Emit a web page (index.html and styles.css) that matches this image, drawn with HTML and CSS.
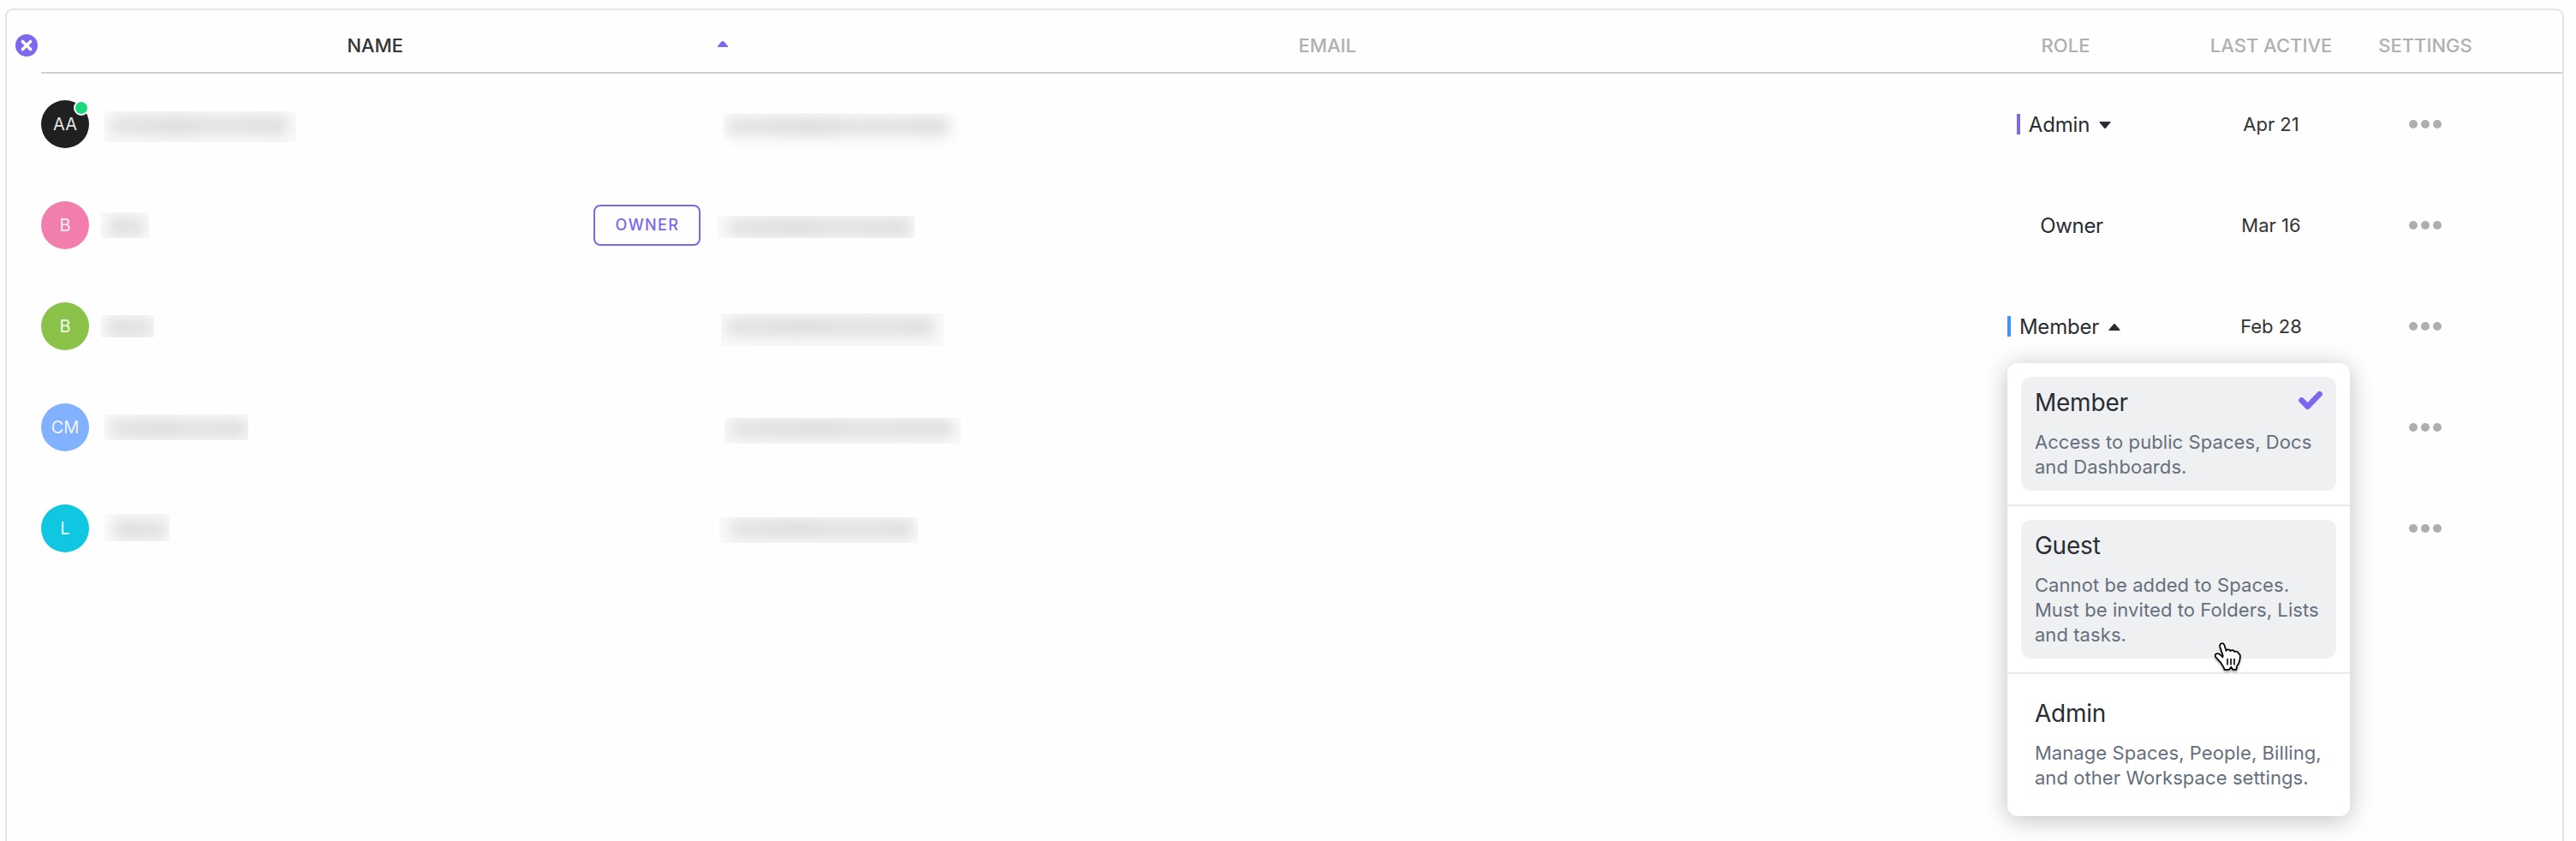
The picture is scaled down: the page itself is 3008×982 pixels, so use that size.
FILE: index.html
```
<!doctype html>
<html lang="en">

<head>
    <meta charset="utf-8">
    <title>People</title>
    <meta name="viewport" content="width=device-width, initial-scale=1">
    <link rel="stylesheet" href="styles.css">
</head>

<body>
    <div class="people">
        <div class="people-header">
            <div class="clear">
                <svg width="26" height="26" viewBox="0 0 26 26">
                    <circle cx="13" cy="13" r="13" fill="#7b68ee"/>
                    <path d="M8.4 8.400l9.200 9.200M17.600 8.400l-9.200 9.200" stroke="#fff" stroke-width="3.600" stroke-linecap="round"/>
                </svg>
            </div>
            <div class="row head-row">
                <div class="th active">NAME
                    <svg class="sort" width="12" height="7" viewBox="0 0 12 7"><path d="M0 7V6L4 1Q6-.8 8 1L12 6V7z" fill="#7b68ee"/></svg>
                </div>
                <div class="th">EMAIL</div>
                <div class="th">ROLE</div>
                <div class="th">LAST ACTIVE</div>
                <div class="th">SETTINGS</div>
            </div>
        </div>

        <div class="row">
            <div class="name">
                <div class="avatar dark">AA<i class="online"></i></div>
                <div class="hidden-text name-1"></div>
            </div>
            <div class="email"><div class="hidden-text email-1"></div></div>
            <div class="role">
                <div class="role-btn admin">Admin<svg class="caret" width="14" height="8" viewBox="0 0 14 8"><path d="M1 0h12q1 0 .5 1L8 7.500q-1 1-2 0L.5 1Q0 0 1 0z" fill="#292d34"/></svg></div>
            </div>
            <div class="date">Apr 21</div>
            <div class="dots"><i></i><i></i><i></i></div>
        </div>

        <div class="row">
            <div class="name">
                <div class="avatar pink">B</div>
                <div class="hidden-text name-2"></div>
                <div class="badge">OWNER</div>
            </div>
            <div class="email"><div class="hidden-text email-2"></div></div>
            <div class="role"><div class="role-owner">Owner</div></div>
            <div class="date">Mar 16</div>
            <div class="dots"><i></i><i></i><i></i></div>
        </div>

        <div class="row">
            <div class="name">
                <div class="avatar green">B</div>
                <div class="hidden-text name-3"></div>
            </div>
            <div class="email"><div class="hidden-text email-3"></div></div>
            <div class="role">
                <div class="role-btn member">Member<svg class="caret" width="14" height="8" viewBox="0 0 14 8"><path d="M1 8h12q1 0 .5-1L8 .5q-1-1-2 0L.5 7Q0 8 1 8z" fill="#292d34"/></svg>
                    <div class="menu">
                        <div class="menu-item">
                            <div class="option selected">
                                <div class="title">Member</div>
                                <svg class="check" width="28" height="23" viewBox="0 0 28 23"><path d="M3.500 11.400l7.100 7.300L24.500 4.200" fill="none" stroke="#7b68ee" stroke-width="6.600" stroke-linecap="round" stroke-linejoin="round"/></svg>
                                <p>Access to public Spaces, Docs<br>and Dashboards.</p>
                            </div>
                        </div>
                        <div class="menu-item">
                            <div class="option hover">
                                <div class="title">Guest</div>
                                <p>Cannot be added to Spaces.<br>Must be invited to Folders, Lists<br>and tasks.</p>
                            </div>
                        </div>
                        <div class="menu-item">
                            <div class="option">
                                <div class="title">Admin</div>
                                <p>Manage Spaces, People, Billing,<br>and other Workspace settings.</p>
                            </div>
                        </div>
                        <svg class="cursor" width="36" height="38" viewBox="0 0 36 38">
                            <path d="M12 18.500L8.300 7.200C7.300 3 12 1.500 13.400 5.300L15.500 12c.8-2.200 4.200-2 4.900.2 1.200-1.600 4-1.300 4.700.8 1.700-1 4.200-.3 4.700 2 1.800.4 2.200 2 2 4-.2 5-1.300 7.500-3.600 10.500-.6 1-.7 2.300-.7 4.300h-4.200l-2-3-2.300 3h-5.500c-.3-3-2.700-5-4.500-8.500L3.500 19.500C1 16 5 13.500 8.500 16.500L12 20" fill="#fff" stroke="#000" stroke-width="1.700" stroke-linejoin="round"/>
                            <path d="M17 21v7.500M21 21v7.500M25 21v7.500" stroke="#000" stroke-width="1.600"/>
                        </svg>
                    </div>
                </div>
            </div>
            <div class="date">Feb 28</div>
            <div class="dots"><i></i><i></i><i></i></div>
        </div>

        <div class="row">
            <div class="name">
                <div class="avatar blue">CM</div>
                <div class="hidden-text name-4"></div>
            </div>
            <div class="email"><div class="hidden-text email-4"></div></div>
            <div class="role"></div>
            <div class="date"></div>
            <div class="dots"><i></i><i></i><i></i></div>
        </div>

        <div class="row">
            <div class="name">
                <div class="avatar cyan">L</div>
                <div class="hidden-text name-5"></div>
            </div>
            <div class="email"><div class="hidden-text email-5"></div></div>
            <div class="role"></div>
            <div class="date"></div>
            <div class="dots"><i></i><i></i><i></i></div>
        </div>
    </div>
</body>

</html>
```
FILE: styles.css
```
* {
    box-sizing: border-box;
}

html,
body {
    height: 100%;
    margin: 0;
    background: #fefefe;
    font-family: Inter, "Liberation Sans", sans-serif;
    color: #292d34;
    overflow: hidden;
}

.people {
    margin: 10px 14px 0 6px;
    height: 1000px;
    border: 2px solid #e4e4e4;
    border-radius: 9px;
}

.people-header {
    display: flex;
    height: 74px;
}

.clear {
    width: 40px;
    padding: 28px 0 0 10px;
}

.clear svg {
    display: block;
}

.row {
    display: grid;
    grid-template-columns: 780px 1fr 280px 200px 160px 80px;
    height: 118px;
    margin-left: 40px;
}

.head-row {
    flex: 1;
    height: 74px;
    margin-left: 0;
    border-bottom: 2px solid #d0d0d0;
}

.th {
    position: relative;
    padding-top: 27px;
    text-align: center;
    font-size: 22px;
    line-height: 28px;
    font-weight: 500;
    color: #b0b0b0;
}

.th.active {
    color: #343434;
}

.sort {
    position: absolute;
    right: -22px;
    top: 36px;
}

/* name + email */
.name,
.email {
    display: flex;
}

.avatar {
    position: relative;
    width: 56px;
    height: 56px;
    margin-top: 31px;
    border-radius: 50%;
    text-align: center;
    font-size: 20px;
    line-height: 56px;
    color: rgba(255, 255, 255, .9);
}

.dark { background: #202020; }
.pink { background: #f27eae; }
.green { background: #8bc34a; }
.blue { background: #81b1ff; }
.cyan { background: #10c7e2; }

.online {
    position: absolute;
    left: 38px;
    top: 0;
    width: 18px;
    height: 18px;
    border: 2px solid #fff;
    border-radius: 50%;
    background: #1bd97b;
}

.badge {
    width: 125px;
    height: 48px;
    margin: 35px 10px 0 auto;
    padding-left: 1px;
    border: 2px solid #7b68ee;
    border-radius: 8px;
    text-align: center;
    font-size: 18px;
    font-weight: 500;
    letter-spacing: 1.4px;
    line-height: 44px;
    color: #7b68ee;
}

.hidden-text {
    position: relative;
    overflow: hidden;
    background: #fafafa;
}

.hidden-text::before {
    content: "";
    display: block;
    height: 23px;
    margin: -4px -3px 0;
    border-radius: 8px;
    background: linear-gradient(90deg, #e3e3e3, #dcdcdc 40%, #e2e2e2 58%, #dedede);
    filter: blur(8px);
}

.name-1 { width: 224px; height: 36px; margin: 44px 0 0 18px; padding: 9px 12px 0 8px; }
.name-2 { width: 56px; height: 30px; margin: 44px 0 0 14px; padding: 9px 8px 0 10px; }
.name-3 { width: 62px; height: 26px; margin: 46px 0 0 14px; padding: 7px 5px 0 8px; }
.name-4 { width: 168px; height: 30px; margin: 44px 0 0 18px; padding: 9px 4px 0 8px; }
.name-5 { width: 76px; height: 32px; margin: 42px 0 0 18px; padding: 11px 6px 0 12px; }
.email-1 { width: 286px; height: 53px; margin: 46px 0 0 16px; padding: 8px 24px 0 6px; background: none; }
.email-2 { width: 230px; height: 26px; margin: 48px 0 0 10px; padding: 6px 6px 0 14px; }
.email-3 { width: 260px; height: 38px; margin: 44px 0 0 14px; padding: 8px 14px 0 8px; }
.email-4 { width: 276px; height: 30px; margin: 48px 0 0 18px; padding: 5px 12px 0 8px; }
.email-5 { width: 232px; height: 30px; margin: 46px 0 0 12px; padding: 6px 8px 0 14px; }

/* role */
.role {
    display: flex;
    justify-content: center;
    padding: 45px 4px 0 0;
    font-size: 24px;
    line-height: 28px;
}

.role-owner {
    padding: 1px 0 0 18px;
    letter-spacing: -.3px;
}

.role-btn {
    position: relative;
    display: flex;
    align-items: center;
    height: 28px;
    padding-top: 1px;
    letter-spacing: -.2px;
}

.role-btn::before {
    content: "";
    width: 4px;
    height: 24px;
    margin: -1px 10px 0 0;
    background: #7b68ee;
}

.role-btn.member::before {
    background: #4194f6;
}

.caret {
    margin-left: 11px;
}

.date {
    padding-top: 45px;
    text-align: center;
    font-size: 22px;
    line-height: 28px;
    color: #343434;
}

.dots {
    display: flex;
    justify-content: center;
    gap: 4px;
    padding-top: 54px;
}

.dots i {
    width: 10px;
    height: 10px;
    border-radius: 50%;
    background: #afadaf;
}

/* role menu */
.menu {
    position: absolute;
    left: 0;
    top: 57px;
    width: 400px;
    height: 529px;
    border-radius: 12px;
    background: #fff;
    box-shadow: 0 4px 28px rgba(0, 0, 0, .25);
    letter-spacing: normal;
    z-index: 2;
}

.menu-item {
    padding: 16px;
}

.menu-item + .menu-item {
    border-top: 2px solid #e9ebf0;
}

.option {
    position: relative;
    padding: 12px 16px 13px;
    border-radius: 12px;
}

.option.selected,
.option.hover {
    background: #eff0f2;
}

.title {
    font-size: 28px;
    line-height: 36px;
    letter-spacing: -.2px;
}

.check {
    position: absolute;
    right: 16px;
    top: 16px;
}

.option p {
    margin: 14px 0 0;
    font-size: 22px;
    line-height: 29px;
    letter-spacing: .08px;
    color: #656f7d;
    white-space: nowrap;
}

.cursor {
    position: absolute;
    left: 240px;
    top: 324px;
    filter: drop-shadow(0 2px 1px rgba(0, 0, 0, .35));
}
```
